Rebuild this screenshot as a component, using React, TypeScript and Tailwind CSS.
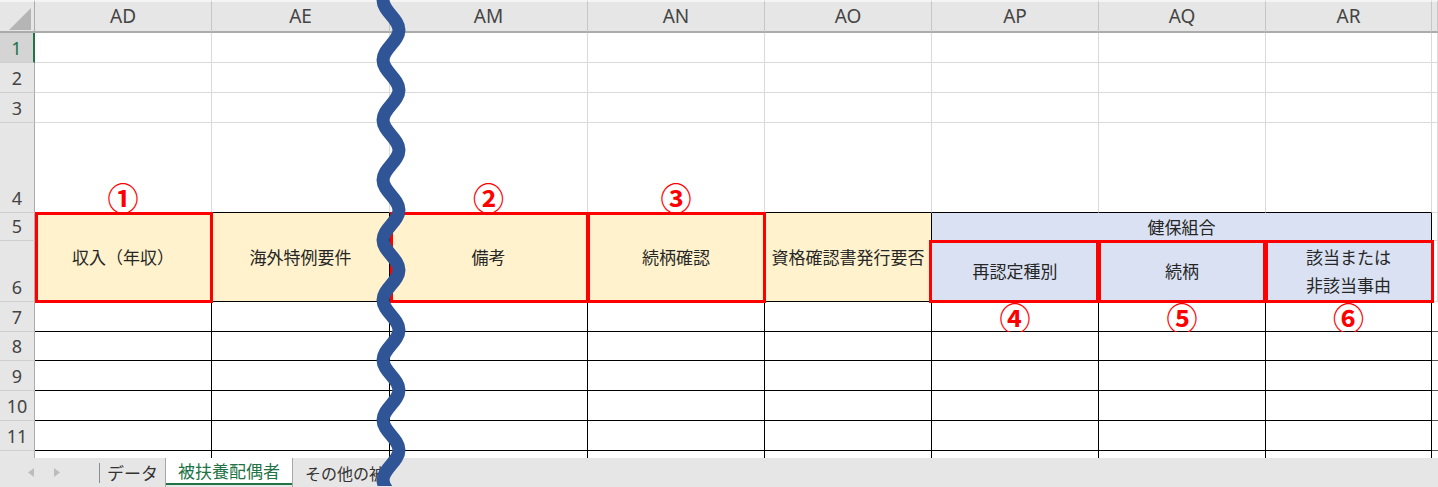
import React from "react";

// Spreadsheet excerpt: columns AD, AE, (break), AM..AR, rows 1-11 + sheet tabs
const COLS = ["AD", "AE", "AM", "AN", "AO", "AP", "AQ", "AR", ""];

const JP = "font-['Noto_Sans_CJK_JP',sans-serif]";
const LATIN = "font-['Noto_Sans','Noto_Sans_CJK_JP',sans-serif]";

const hdr =
  "flex items-center justify-center bg-[#e6e6e6] border-t-2 border-t-[#f4f4f4] border-b-2 border-b-[#ababab] border-r border-r-[#c6c6c6] text-[19px] text-[#444]";
const rowHdr =
  "flex items-end justify-center pb-[2px] bg-[#e6e6e6] border-r border-r-[#ababab] border-b border-b-[#cfcfcf] text-[18px] leading-[24px] text-[#444]";
const plain = "bg-white border-r border-b border-[#dadada]";
const yellow =
  "relative row-span-2 flex items-center justify-center bg-[#fff2cc] border-r border-b border-black text-[17px] text-[#262626] whitespace-nowrap";
const blue =
  "relative flex items-center justify-center bg-[#d9e1f2] border-r border-b border-black text-[17px] text-[#262626] whitespace-nowrap";
const line = "bg-white border-r border-b border-black";

function RedFrame({ className }: { className: string }) {
  return <div className={`pointer-events-none absolute z-10 border-[3px] border-[#ff0000] ${className}`} />;
}

function Circled({ n }: { n: string }) {
  return <span className="text-[31px] font-bold leading-[30px] text-[#ff0000]">{n}</span>;
}

function RowHeader({ n, active }: { n: number; active?: boolean }) {
  return (
    <div
      className={
        active
          ? "flex items-end justify-center pb-[2px] bg-[#d4d4d4] border-r-2 border-r-[#217346] border-b border-b-[#cfcfcf] text-[18px] leading-[24px] text-[#217346]"
          : rowHdr
      }
    >
      {n}
    </div>
  );
}

// sine-like wave: left extremes every 60px, right extremes in between
function wavePath() {
  let d = "M 13 -60";
  for (let y = -60; y < 540; y += 60) {
    d += ` C 13 ${y + 11}, 29 ${y + 19}, 29 ${y + 30} C 29 ${y + 41}, 13 ${y + 49}, 13 ${y + 60}`;
  }
  return d;
}

export default function App() {
  return (
    <div className={`relative h-[487px] w-[1438px] overflow-hidden bg-white ${LATIN}`}>
      <div className="grid grid-cols-[35px_177px_178px_198px_177px_167px_167px_167px_166px_6px] grid-rows-[33px_30px_30px_30px_90px_28px_61px_30px_29px_30px_30px_30px_7px]">
        {/* column headers */}
        <div className="relative bg-[#e6e6e6] border-t-2 border-t-[#f4f4f4] border-b-2 border-b-[#ababab] border-r border-r-[#ababab]">
          <svg className="absolute left-[9px] top-[6px]" width="22" height="22" viewBox="0 0 22 22">
            <polygon points="22,0 22,22 0,22" fill="#b5b5b5" />
          </svg>
        </div>
        {COLS.map((c, i) => (
          <div key={i} className={hdr}>
            {c}
          </div>
        ))}

        {/* rows 1-3 */}
        {[1, 2, 3].map((r) => (
          <React.Fragment key={r}>
            <RowHeader n={r} active={r === 1} />
            {COLS.map((_, i) => (
              <div key={i} className={plain} />
            ))}
          </React.Fragment>
        ))}

        {/* row 4 */}
        <RowHeader n={4} />
        {COLS.map((_, i) => (
          <div
            key={i}
            className={`flex items-end justify-center bg-white border-r border-r-[#dadada] border-b ${
              i < 8 ? "border-b-black" : "border-b-[#dadada]"
            } ${JP}`}
          >
            {i === 0 && <Circled n="①" />}
            {i === 2 && <Circled n="②" />}
            {i === 3 && <Circled n="③" />}
          </div>
        ))}

        {/* row 5 */}
        <RowHeader n={5} />
        <div className={`${yellow} ${JP}`}>
          収入（年収）
          <RedFrame className="left-0 -top-px -right-[2px] -bottom-[2px]" />
        </div>
        <div className={`${yellow} ${JP}`}>海外特例要件</div>
        <div className={`${yellow} ${JP}`}>
          備考
          <RedFrame className="left-0 -top-px -right-[2px] -bottom-[2px]" />
        </div>
        <div className={`${yellow} ${JP}`}>
          続柄確認
          <RedFrame className="-left-px -top-px -right-[2px] -bottom-[2px]" />
        </div>
        <div className={`${yellow} ${JP}`}>資格確認書発行要否</div>
        <div className={`${blue} col-span-3 ${JP}`}>健保組合</div>
        <div className={plain} />

        {/* row 6 */}
        <RowHeader n={6} />
        <div className={`${blue} ${JP}`}>
          再認定種別
          <RedFrame className="-left-[3px] -top-px -right-px -bottom-[2px]" />
        </div>
        <div className={`${blue} ${JP}`}>
          続柄
          <RedFrame className="-left-px -top-px -right-px -bottom-[2px]" />
        </div>
        <div className={`${blue} flex-col leading-[28px] ${JP}`}>
          <span>該当または</span>
          <span>非該当事由</span>
          <RedFrame className="-left-px -top-px -right-[3px] -bottom-[2px]" />
        </div>
        <div className={plain} />

        {/* rows 7-11 */}
        {[7, 8, 9, 10, 11].map((r) => (
          <React.Fragment key={r}>
            <RowHeader n={r} />
            {COLS.map((_, i) => (
              <div
                key={i}
                className={`flex items-center justify-center ${
                  i < 8 ? line : "bg-white border-b border-[#555]"
                } ${JP}`}
              >
                {r === 7 && i === 5 && <Circled n="④" />}
                {r === 7 && i === 6 && <Circled n="⑤" />}
                {r === 7 && i === 7 && <Circled n="⑥" />}
              </div>
            ))}
          </React.Fragment>
        ))}

        {/* partial row 12 */}
        <div className="bg-[#e6e6e6] border-r border-r-[#ababab]" />
        {COLS.map((_, i) => (
          <div key={i} className={i < 8 ? "bg-white border-r border-black" : "bg-white"} />
        ))}
      </div>

      {/* sheet tabs */}
      <div className={`flex h-[29px] items-start bg-[#e6e6e6] text-[17px] ${JP}`}>
        <div className="flex h-full w-[99px] items-center gap-[20px] pl-[28px]">
          <svg width="6" height="9" viewBox="0 0 6 9">
            <polygon points="6,0 6,9 0,4.5" fill="#bdbdbd" />
          </svg>
          <svg width="6" height="9" viewBox="0 0 6 9">
            <polygon points="0,0 0,9 6,4.5" fill="#bdbdbd" />
          </svg>
        </div>
        <div className="mt-[5px] h-[20px] w-px bg-[#8c8c8c]" />
        <div className="flex h-full w-[66px] items-center justify-center border-r border-[#a8a8a8] text-[#333]">
          データ
        </div>
        <div className="flex h-[27px] w-[126px] items-center justify-center border-b-2 border-[#217346] bg-white text-[#217346]">
          被扶養配偶者
        </div>
        <div className="flex h-full w-[96px] items-center overflow-hidden whitespace-nowrap border-l border-[#a8a8a8] pl-[12px] text-[16px] text-[#333]">
          その他の被扶養者
        </div>
      </div>

      {/* break mark */}
      <svg className="absolute left-[370px] top-0 z-20" width="42" height="486" viewBox="0 0 42 486">
        <path d={wavePath()} fill="none" stroke="#2f5597" strokeWidth="13" />
      </svg>
    </div>
  );
}
